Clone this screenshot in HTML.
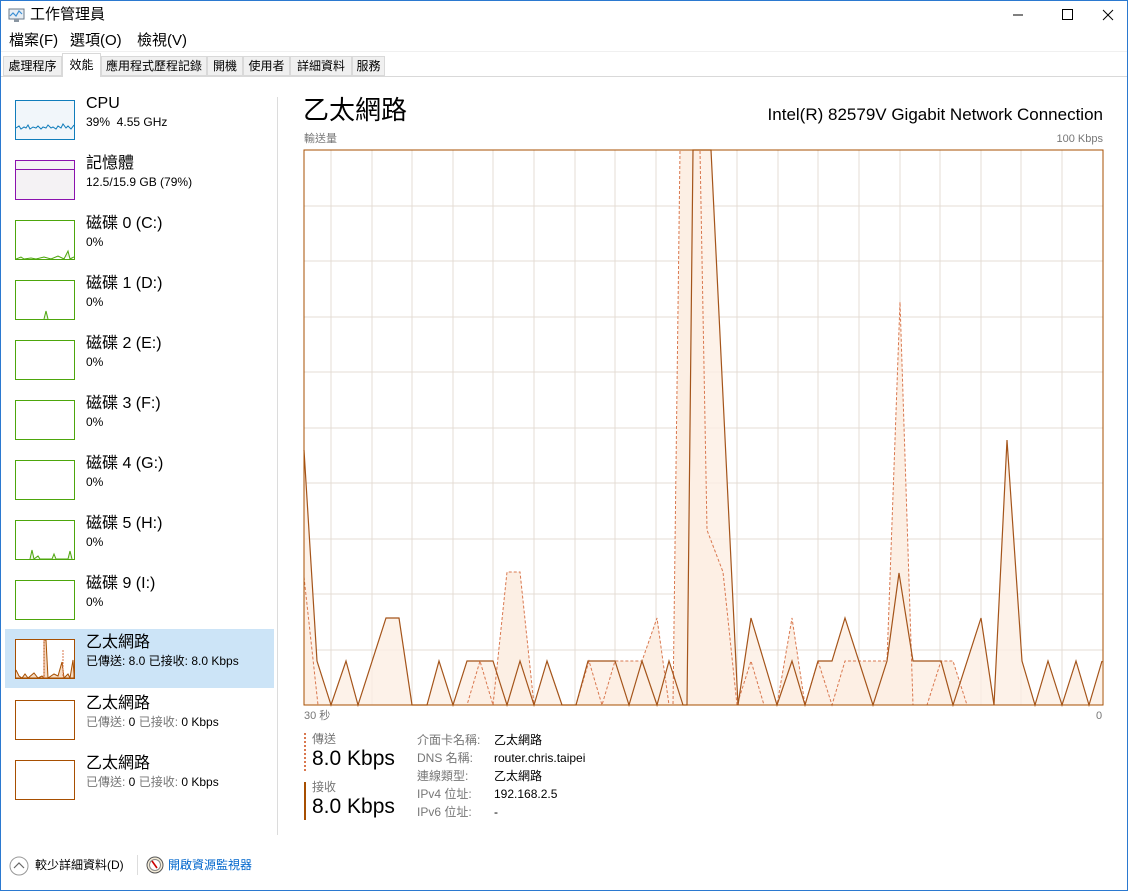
<!DOCTYPE html>
<html><head><meta charset="utf-8"><style>
*{margin:0;padding:0;box-sizing:border-box}
body{width:1128px;height:891px;background:#fff;font-family:"Liberation Sans","Noto Sans CJK TC",sans-serif;position:relative;overflow:hidden;color:#000}
.win{position:absolute;left:0;top:0;width:1128px;height:891px;border:1px solid #2b79d0}
.abs{position:absolute}
.tab{position:absolute;top:56px;height:20px;border:1px solid #d9d9d9;background:#f0f0f0;font-size:12px;line-height:18px;text-align:center}
.item{position:absolute;left:5px;width:269px;height:60px}
.thumb{position:absolute;left:10px;top:10px;width:60px;height:40px;border:1px solid}
.nm{position:absolute;left:81px;top:4px;font-size:16px;line-height:20px}
.sub{position:absolute;left:81px;top:24px;font-size:12px;line-height:16px}
.g{color:#777}
</style></head><body>
<div class="win"></div>
<svg class="abs" style="left:8px;top:7px" width="18" height="16" viewBox="0 0 18 16"><rect x="1" y="2" width="15" height="10" fill="#e8eef4" stroke="#6a7a8a"/><polyline points="2,9 5,6 8,9 11,4 14,7" fill="none" stroke="#3c8fd4" stroke-width="1.2"/><rect x="6" y="12" width="5" height="3" fill="#8a96a2"/></svg>
<div class="abs" style="left:30px;top:5px;font-size:15px;line-height:20px">工作管理員</div>
<svg class="abs" style="left:1005px;top:8px" width="115" height="14"><line x1="8" y1="7" x2="18" y2="7" stroke="#000"/><rect x="57.5" y="1.5" width="10" height="10" fill="none" stroke="#000"/><line x1="98" y1="2" x2="108" y2="12" stroke="#000"/><line x1="108" y1="2" x2="98" y2="12" stroke="#000"/></svg>
<div class="abs" style="left:9px;top:31px;font-size:15px;line-height:20px">檔案(F)</div>
<div class="abs" style="left:70px;top:31px;font-size:15px;line-height:20px">選項(O)</div>
<div class="abs" style="left:137px;top:31px;font-size:15px;line-height:20px">檢視(V)</div>
<div class="abs" style="left:1px;top:51px;width:1126px;height:1px;background:#f0f0f0"></div>
<div class="abs" style="left:1px;top:76px;width:1126px;height:1px;background:#d9d9d9"></div>
<div class="tab" style="left:3px;width:59px">處理程序</div>
<div class="tab" style="left:62px;width:39px;top:53px;height:24px;background:#fff;border-bottom:none;line-height:22px">效能</div>
<div class="tab" style="left:101px;width:106px">應用程式歷程記錄</div>
<div class="tab" style="left:207px;width:36px">開機</div>
<div class="tab" style="left:243px;width:47px">使用者</div>
<div class="tab" style="left:290px;width:62px">詳細資料</div>
<div class="tab" style="left:352px;width:33px">服務</div>

<div class="item" style="top:90px"><div class="thumb" style="border-color:#117dbb;background:#f1f6fa"><svg width="58" height="38" style="position:absolute;left:0;top:0"><polyline points="0,27 3,25 5,28 8,26 10,27 12,24 14,28 17,26 20,27 22,25 25,28 27,26 30,27 32,24 35,27 37,26 40,28 42,25 45,27 47,23 50,27 52,25 55,28 58,24" fill="none" stroke="#117dbb"/></svg></div><div class="nm">CPU</div><div class="sub">39%&nbsp; 4.55 GHz</div></div>
<div class="item" style="top:150px"><div class="thumb" style="border-color:#8b12ae;background:#f4f2f4"><div style="position:absolute;left:0;top:8px;width:58px;height:1px;background:#8b12ae"></div></div><div class="nm">記憶體</div><div class="sub">12.5/15.9 GB (79%)</div></div>
<div class="item" style="top:210px"><div class="thumb" style="border-color:#4da60c"><svg width="58" height="38" style="position:absolute"><polyline points="0,38 5,36 8,38 15,37 20,38 28,36 35,38 42,35 48,38 52,30 54,38 58,36" fill="#eaf4e2" stroke="#4da60c"/></svg></div><div class="nm">磁碟 0 (C:)</div><div class="sub">0%</div></div>
<div class="item" style="top:270px"><div class="thumb" style="border-color:#4da60c"><svg width="58" height="38" style="position:absolute"><polyline points="28,38 30,30 32,38" fill="#eaf4e2" stroke="#4da60c"/></svg></div><div class="nm">磁碟 1 (D:)</div><div class="sub">0%</div></div>
<div class="item" style="top:330px"><div class="thumb" style="border-color:#4da60c"></div><div class="nm">磁碟 2 (E:)</div><div class="sub">0%</div></div>
<div class="item" style="top:390px"><div class="thumb" style="border-color:#4da60c"></div><div class="nm">磁碟 3 (F:)</div><div class="sub">0%</div></div>
<div class="item" style="top:450px"><div class="thumb" style="border-color:#4da60c"></div><div class="nm">磁碟 4 (G:)</div><div class="sub">0%</div></div>
<div class="item" style="top:510px"><div class="thumb" style="border-color:#4da60c"><svg width="58" height="38" style="position:absolute"><polyline points="14,38 16,29 18,38 22,35 24,38 36,38 38,33 40,38 52,38 54,30 56,38" fill="#eaf4e2" stroke="#4da60c"/></svg></div><div class="nm">磁碟 5 (H:)</div><div class="sub">0%</div></div>
<div class="item" style="top:570px"><div class="thumb" style="border-color:#4da60c"></div><div class="nm">磁碟 9 (I:)</div><div class="sub">0%</div></div>
<div class="item" style="top:629px;height:59px;background:#cce4f7"><div class="thumb" style="border-color:#a74f01;background:#fff"><svg width="58" height="38" style="position:absolute"><polyline points="0,30 3,36 6,38 9,34 12,38 18,33 22,38 26,36 28,38 28,0 30,0 32,38 38,34 42,36 46,22 48,38 52,34 54,38 57,20 58,34 58,38 0,38" fill="#f6dcc4" stroke="#a74f01"/><line x1="28" y1="0" x2="28" y2="38" stroke="#d9784f" stroke-dasharray="2,1"/><line x1="47" y1="10" x2="47" y2="38" stroke="#d9784f" stroke-dasharray="2,1"/></svg></div><div class="nm">乙太網路</div><div class="sub">已傳送: 8.0 已接收: 8.0 Kbps</div></div>
<div class="item" style="top:690px"><div class="thumb" style="border-color:#a74f01"></div><div class="nm">乙太網路</div><div class="sub"><span class="g">已傳送:</span> 0 <span class="g">已接收:</span> 0 Kbps</div></div>
<div class="item" style="top:750px"><div class="thumb" style="border-color:#a74f01"></div><div class="nm">乙太網路</div><div class="sub"><span class="g">已傳送:</span> 0 <span class="g">已接收:</span> 0 Kbps</div></div>
<div class="abs" style="left:277px;top:97px;width:1px;height:738px;background:#dcdcdc"></div>

<div class="abs" style="left:303px;top:93px;font-size:26px;line-height:34px">乙太網路</div>
<div class="abs" style="right:25px;top:104px;font-size:17px;line-height:22px">Intel(R) 82579V Gigabit Network Connection</div>
<div class="abs g" style="left:304px;top:132px;font-size:11px;line-height:14px">輸送量</div>
<div class="abs g" style="right:25px;top:132px;font-size:11px;line-height:14px">100 Kbps</div>
<svg class="abs" style="left:303px;top:149px" width="801" height="558" viewBox="303 149 801 558">
<g stroke="#e4dcd4" stroke-width="1">
<line x1="331" y1="150" x2="331" y2="705"/><line x1="372" y1="150" x2="372" y2="705"/><line x1="412" y1="150" x2="412" y2="705"/><line x1="453" y1="150" x2="453" y2="705"/><line x1="493" y1="150" x2="493" y2="705"/><line x1="534" y1="150" x2="534" y2="705"/><line x1="575" y1="150" x2="575" y2="705"/><line x1="615" y1="150" x2="615" y2="705"/><line x1="656" y1="150" x2="656" y2="705"/><line x1="697" y1="150" x2="697" y2="705"/><line x1="737" y1="150" x2="737" y2="705"/><line x1="778" y1="150" x2="778" y2="705"/><line x1="818" y1="150" x2="818" y2="705"/><line x1="859" y1="150" x2="859" y2="705"/><line x1="900" y1="150" x2="900" y2="705"/><line x1="940" y1="150" x2="940" y2="705"/><line x1="981" y1="150" x2="981" y2="705"/><line x1="1021" y1="150" x2="1021" y2="705"/><line x1="1062" y1="150" x2="1062" y2="705"/>
<line x1="304" y1="206" x2="1103" y2="206"/><line x1="304" y1="261" x2="1103" y2="261"/><line x1="304" y1="317" x2="1103" y2="317"/><line x1="304" y1="372" x2="1103" y2="372"/><line x1="304" y1="428" x2="1103" y2="428"/><line x1="304" y1="483" x2="1103" y2="483"/><line x1="304" y1="539" x2="1103" y2="539"/><line x1="304" y1="594" x2="1103" y2="594"/><line x1="304" y1="650" x2="1103" y2="650"/>
</g>
<polygon points="304,705 304,577 318,705 467,705 480,661 493,705 507,572 520,572 534,705 576,705 589,661 602,705 615,661 642,661 657,618 669,705 673,705 680,150 700,150 707,530 723,572 737,705 751,661 764,705 777,705 792,618 805,705 818,661 832,705 845,661 887,661 900,302 913,705 927,705 941,661 953,661 967,705" fill="#fcefe4" stroke="none"/>
<polygon points="304,450 317,661 331,705 346,661 358,705 386,618 399,618 412,705 427,705 439,661 453,705 467,661 493,661 507,705 520,661 534,705 547,661 562,705 576,705 588,661 615,661 629,705 642,661 657,705 669,661 683,705 687,705 693,150 711,150 738,705 751,618 777,705 792,661 805,705 818,661 832,661 845,618 873,705 887,661 899,573 913,661 941,661 953,705 981,618 994,705 1007,440 1022,661 1035,705 1048,661 1062,705 1076,661 1089,705 1102,661 1102,705 304,705" fill="#fcefe4" fill-opacity="0.8" stroke="none"/>
<polyline points="304,577 318,705 467,705 480,661 493,705 507,572 520,572 534,705 576,705 589,661 602,705 615,661 642,661 657,618 669,705 673,705 680,150 700,150 707,530 723,572 737,705 751,661 764,705 777,705 792,618 805,705 818,661 832,705 845,661 887,661 900,302 913,705 927,705 941,661 953,661 967,705" fill="none" stroke="#d9784f" stroke-dasharray="3,2"/>
<polyline points="304,450 317,661 331,705 346,661 358,705 386,618 399,618 412,705 427,705 439,661 453,705 467,661 493,661 507,705 520,661 534,705 547,661 562,705 576,705 588,661 615,661 629,705 642,661 657,705 669,661 683,705 687,705 693,150 711,150 738,705 751,618 777,705 792,661 805,705 818,661 832,661 845,618 873,705 887,661 899,573 913,661 941,661 953,705 981,618 994,705 1007,440 1022,661 1035,705 1048,661 1062,705 1076,661 1089,705 1102,661" fill="none" stroke="#a4541a" stroke-width="1.2"/>
<rect x="304" y="150" width="799" height="555" fill="none" stroke="#a74f01" stroke-width="1"/>
</svg>
<div class="abs g" style="left:304px;top:709px;font-size:11px;line-height:14px">30 秒</div>
<div class="abs g" style="left:1096px;top:709px;font-size:11px;line-height:14px">0</div>

<div class="abs" style="left:304px;top:733px;width:2px;height:38px;border-left:2px dotted #d9784f"></div>
<div class="abs g" style="left:312px;top:731px;font-size:12px;line-height:16px">傳送</div>
<div class="abs" style="left:312px;top:746px;font-size:21px;line-height:26px">8.0 Kbps</div>
<div class="abs" style="left:304px;top:782px;width:2px;height:38px;background:#a74f01"></div>
<div class="abs g" style="left:312px;top:779px;font-size:12px;line-height:16px">接收</div>
<div class="abs" style="left:312px;top:794px;font-size:21px;line-height:26px">8.0 Kbps</div>
<div class="abs g" style="left:417px;top:731px;font-size:12px;line-height:18px">介面卡名稱:<br>DNS 名稱:<br>連線類型:<br>IPv4 位址:<br>IPv6 位址:</div>
<div class="abs" style="left:494px;top:731px;font-size:12px;line-height:18px">乙太網路<br>router.chris.taipei<br>乙太網路<br>192.168.2.5<br>-</div>

<svg class="abs" style="left:9px;top:856px" width="20" height="20"><circle cx="10" cy="10" r="9" fill="#fff" stroke="#999"/><polyline points="5,12 10,7 15,12" fill="none" stroke="#666" stroke-width="1.2"/></svg>
<div class="abs" style="left:35px;top:857px;font-size:12px;line-height:16px">較少詳細資料(D)</div>
<div class="abs" style="left:137px;top:855px;width:1px;height:20px;background:#ddd"></div>
<svg class="abs" style="left:146px;top:856px" width="18" height="18"><circle cx="9" cy="9" r="8" fill="#f4ecd8" stroke="#555"/><circle cx="9" cy="9" r="5.5" fill="#fff" stroke="#888"/><line x1="6" y1="5" x2="11" y2="12" stroke="#c00" stroke-width="1.6"/></svg>
<div class="abs" style="left:168px;top:857px;font-size:12px;line-height:16px;color:#0066cc">開啟資源監視器</div>
</body></html>
